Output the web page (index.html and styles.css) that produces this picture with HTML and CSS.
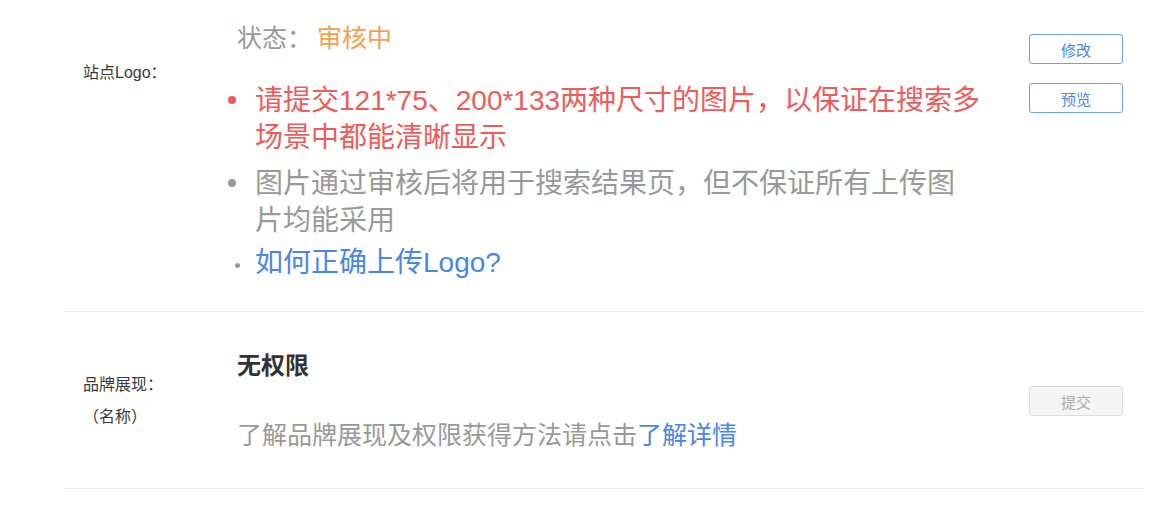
FILE: index.html
```html
<!DOCTYPE html>
<html lang="zh-CN">
<head>
    <meta charset="UTF-8">
    <meta name="viewport" content="width=device-width, initial-scale=1.0">
    <title>站点属性</title>
    <link rel="stylesheet" href="styles.css">
</head>
<body>
    <div class="panel">
        <div class="row row-logo">
            <div class="row-label">站点Logo：</div>
            <div class="row-body">
                <div class="status">状态：<span class="status-value">审核中</span></div>
                <ul class="tips">
                    <li class="tip tip-warn">请提交121*75、200*133两种尺寸的图片，以保证在搜索多场景中都能清晰显示</li>
                    <li class="tip">图片通过审核后将用于搜索结果页，但不保证所有上传图片均能采用</li>
                    <li class="tip tip-link"><a href="#">如何正确上传Logo?</a></li>
                </ul>
            </div>
            <div class="row-actions">
                <button type="button" class="btn">修改</button>
                <button type="button" class="btn">预览</button>
            </div>
        </div>
        <div class="row row-brand">
            <div class="row-label">
                <div>品牌展现：</div>
                <div>（名称）</div>
            </div>
            <div class="row-body">
                <div class="brand-title">无权限</div>
                <div class="brand-desc">了解品牌展现及权限获得方法请点击<a href="#">了解详情</a></div>
            </div>
            <div class="row-actions">
                <button type="button" class="btn btn-disabled" disabled>提交</button>
            </div>
        </div>
    </div>
</body>
</html>
```

FILE: styles.css
```css
body {
    font-family: "Liberation Sans", "Noto Sans CJK SC", sans-serif;
    background-color: #fff;
    color: #333;
    margin: 0;
    padding: 0;
}
a {
    color: #4a86e8;
    text-decoration: none;
}
.panel {
    width: 1080px;
    margin-left: 64px;
}
.row {
    display: flex;
    border-bottom: 1px solid #ececec;
}
.row-label {
    width: 173px;
    padding-left: 19px;
    box-sizing: border-box;
    font-size: 16px;
    color: #3a3a3a;
}
.row-body {
    flex: 1;
}
.row-actions {
    width: 94px;
    margin-right: 21px;
    display: flex;
    flex-direction: column;
    gap: 19px;
}

/* logo row */
.row-logo {
    align-items: flex-start;
    padding: 20px 0 30px;
}
.row-logo .row-label {
    margin-top: 43px;
    line-height: 20px;
}
.row-logo .row-actions {
    margin-top: 14px;
}
.status {
    font-size: 25px;
    line-height: 36px;
    color: #999;
}
.status-value {
    margin-left: 5px;
    color: #f5a04b;
}
.tips {
    list-style: none;
    margin: 26px 0 0 -9px;
    padding: 0;
    width: 754px;
    font-size: 28px;
    line-height: 37px;
    color: #999;
}
.tip {
    display: flex;
    align-items: flex-start;
}
.tip::before {
    content: "";
    flex: none;
    width: 8px;
    height: 8px;
    margin: 14px 19px 0 0;
    border-radius: 50%;
    background-color: #999;
}
.tip + .tip {
    margin-top: 9px;
}
.tip-warn {
    color: #f15a5a;
}
.tip-warn::before {
    background-color: #f15a5a;
}
.tip.tip-link {
    margin-top: 5px;
}
.tip-link::before {
    width: 5px;
    height: 5px;
    margin: 19px 15px 0 7px;
}

/* brand row */
.row-brand {
    align-items: center;
    padding: 37px 0 35px;
}
.row-brand .row-label {
    line-height: 32px;
}
.brand-title {
    font-size: 24px;
    line-height: 34px;
    font-weight: bold;
    color: #333;
}
.brand-desc {
    margin-top: 34px;
    font-size: 25px;
    line-height: 36px;
    color: #999;
}

.btn {
    width: 94px;
    height: 30px;
    padding: 0;
    border: 1px solid #6f9df0;
    border-radius: 3px;
    background-color: #fff;
    color: #4a86e8;
    font-family: inherit;
    font-size: 15px;
    cursor: pointer;
}
.btn-disabled {
    border-color: #dcdcdc;
    background-color: #f5f5f5;
    color: #aaa;
    cursor: default;
}
```
